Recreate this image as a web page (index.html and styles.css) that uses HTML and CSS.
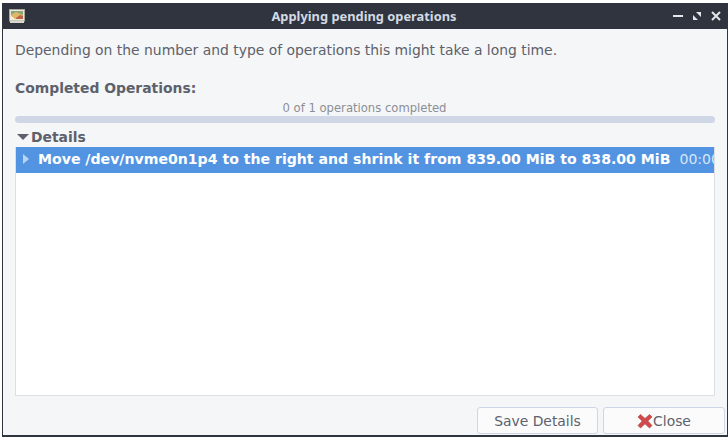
FILE: index.html
```html
<!DOCTYPE html>
<html lang="en">
<head>
    <meta charset="UTF-8">
    <title>Applying pending operations</title>
    <link rel="stylesheet" href="styles.css">
</head>
<body>
    <div class="window">
        <div class="titlebar">
            <svg class="appIcon" width="16" height="14" viewBox="0 0 16 14">
                <rect x="0.5" y="0.5" width="15" height="11.5" fill="#ece8d8" stroke="#a9a796"/>
                <rect x="2" y="2" width="12" height="8" fill="#8aa67c"/>
                <path d="M2 6 L7 3 L14 6 V10 H2 Z" fill="#e0b868"/>
                <path d="M7 9 L11 6 L14 7 V10 H7 Z" fill="#b9654a"/>
                <path d="M2 7 L6 10 H2 Z" fill="#f4f4ec"/>
                <rect x="1" y="12" width="14" height="2" fill="#d8d8d0"/>
            </svg>
            <span class="title">Applying pending operations</span>
            <div class="winBtns">
                <svg width="10" height="10" viewBox="0 0 10 10"><rect x="0" y="4" width="10" height="2" fill="#e4e6ea"/></svg>
                <svg width="10" height="10" viewBox="0 0 10 10"><path d="M4 1 H9 V6 Z M1 4 L6 9 H1 Z" fill="#e4e6ea"/></svg>
                <svg width="10" height="10" viewBox="0 0 10 10"><path d="M1 1 L9 9 M9 1 L1 9" stroke="#e4e6ea" stroke-width="2"/></svg>
            </div>
        </div>
        <div class="content">
            <p class="intro">Depending on the number and type of operations this might take a long time.</p>
            <h3 class="completed">Completed Operations:</h3>
            <div class="progressText">0 of 1 operations completed</div>
            <div class="progressBar"></div>
            <div class="expander"><span class="arrowDown"></span>Details</div>
            <div class="details">
                <div class="row">
                    <span class="arrowRight"></span>
                    <span class="rowName">Move /dev/nvme0n1p4 to the right and shrink it from 839.00 MiB to 838.00 MiB</span>
                    <span class="rowTime">00:00:00</span>
                </div>
            </div>
            <div class="buttons">
                <button class="btn saveBtn">Save Details</button>
                <button class="btn closeBtn">
                    <svg width="16" height="16" viewBox="0 0 16 16"><path d="M3.5 1.5 L8 5.5 L12.5 1.5 L15 4 L10.8 8 L15 12.5 L12.5 15 L8 10.8 L3.5 15 L1 12.5 L5.2 8 L1 4 Z" fill="#d2494c" stroke="#a83a3c" stroke-width="0.6"/></svg>Close
                </button>
            </div>
        </div>
    </div>
</body>
</html>
```

FILE: styles.css
```css
*{
    box-sizing: border-box;
}
body{
    margin: 0;
    width: 728px;
    height: 438px;
    background-color: #ffffff;
    font-family: "DejaVu Sans", sans-serif;
    overflow: hidden;
}
.window{
    display: flex;
    flex-direction: column;
    width: 726px;
    height: 437px;
    margin: 0 0 0 2px;
    padding-top: 3px;
}
.titlebar{
    display: flex;
    align-items: center;
    height: 26px;
    padding: 0 7px 0 7px;
    background-color: #2f343f;
    flex-shrink: 0;
}
.appIcon{
    flex-shrink: 0;
}
.title{
    flex: 1;
    text-align: center;
    color: #d3dae3;
    font-family: "Noto Sans", sans-serif;
    font-size: 12.85px;
    font-weight: 700;
    padding-left: 30px;
}
.winBtns{
    display: flex;
    gap: 9px;
    align-items: center;
}
.content{
    flex: 1;
    display: flex;
    flex-direction: column;
    min-height: 0;
    background-color: #f5f6f7;
    border-left: 1px solid #2f343f;
    border-right: 1px solid #2f343f;
    border-bottom: 2px solid #2f343f;
    padding: 0 1px 0 12px;
    color: #5c616c;
}
.intro{
    margin: 13px 0 0 0;
    font-size: 13.9px;
    line-height: 16px;
}
.completed{
    margin: 22px 0 0 0;
    font-size: 13.9px;
    line-height: 16px;
}
.progressText{
    margin-top: 6px;
    text-align: center;
    font-size: 11.6px;
    line-height: 13px;
    padding-right: 12px;
    color: #8b8e96;
}
.progressBar{
    height: 7px;
    margin: 1px 0 0 0;
    width: 700px;
    border-radius: 4px;
    background-color: #cfd6e6;
}
.expander{
    display: flex;
    align-items: center;
    margin-top: 4px;
    height: 20px;
    font-size: 13.9px;
    font-weight: bold;
}
.arrowDown{
    width: 0;
    height: 0;
    margin: 0 2px 0 2px;
    border-left: 6px solid transparent;
    border-right: 6px solid transparent;
    border-top: 6px solid #5c616c;
}
.details{
    flex: 1;
    width: 700px;
    min-height: 0;
    background-color: #ffffff;
    border: 1px solid #dcdfe3;
    border-top: none;
    overflow: hidden;
}
.row{
    display: flex;
    align-items: center;
    height: 26px;
    padding: 0 0 2px 7px;
    background-color: #5294e2;
    color: #ffffff;
    font-size: 14.1px;
    white-space: nowrap;
}
.arrowRight{
    flex-shrink: 0;
    width: 0;
    height: 0;
    margin-right: 9px;
    border-top: 5px solid transparent;
    border-bottom: 5px solid transparent;
    border-left: 6px solid #b8d4f3;
}
.rowName{
    flex-shrink: 0;
    font-weight: bold;
}
.rowTime{
    flex-shrink: 0;
    margin-left: 9px;
    color: #d5e5f8;
}
.buttons{
    display: flex;
    justify-content: flex-end;
    gap: 5px;
    height: 39px;
    padding: 11px 1px 0 0;
    flex-shrink: 0;
}
.btn{
    display: flex;
    align-items: center;
    justify-content: center;
    height: 27px;
    border: 1px solid #cfd6e6;
    border-radius: 3px;
    background-color: #fbfbfc;
    color: #5c616c;
    font-family: "DejaVu Sans", sans-serif;
    font-size: 13.9px;
    padding: 0;
}
.saveBtn{
    width: 121px;
}
.closeBtn{
    width: 122px;
}
```
